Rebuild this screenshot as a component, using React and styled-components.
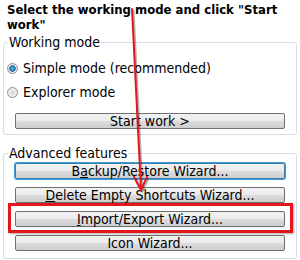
import React from "react";
import styled, { createGlobalStyle } from "styled-components";

const Global = createGlobalStyle`
  html, body { margin: 0; padding: 0; background: #fff; }
  body { width: 300px; height: 260px; overflow: hidden; }
`;

const Page = styled.div`
  position: relative;
  width: 300px;
  height: 260px;
  box-sizing: border-box;
  padding: 2px 3px 0 3px;
  font-family: "DejaVu Sans Condensed", "DejaVu Sans", sans-serif;
  color: #000;
`;

const Title = styled.h1`
  margin: 0 0 0 4px;
  font-size: 13px;
  line-height: 15px;
  font-weight: bold;
  width: 280px;
`;

const Group = styled.fieldset`
  margin: ${(p) => p.$top}px 0 0 0;
  padding: ${(p) => p.$pad};
  border: 1px solid #d5dfe5;
  border-radius: 3px;
  display: flex;
  flex-direction: column;
  gap: 8px;
  min-width: 0;
`;

const Legend = styled.legend`
  padding: 0 1px;
  margin-left: 0;
  font-size: 14px;
  line-height: 15px;
`;

const RadioRow = styled.label`
  display: flex;
  align-items: center;
  gap: 5px;
  font-size: 14px;
  line-height: 16px;
  margin-left: -1px;
`;

const RadioDot = styled.span`
  width: 9px;
  height: 9px;
  border-radius: 50%;
  border: 1px solid #8f8f8f;
  background: ${(p) =>
    p.$checked
      ? "radial-gradient(circle, #6cc3f0 0, #1e6fa8 2.5px, #2a7cb8 3px, #e8e8e8 3.6px, #f4f4f4 100%)"
      : "radial-gradient(circle, #d8d8d8 0, #eeeeee 60%, #f8f8f8 100%)"};
`;

const Button = styled.button`
  display: block;
  width: auto;
  height: 16px;
  margin: ${(p) => (p.$spaced ? "5px 7px 0 7px" : "0 7px")};
  padding: 0;
  box-sizing: border-box;
  border: 1px solid #707070;
  border-radius: 2px;
  background: linear-gradient(#f2f2f2 0%, #ebebeb 50%, #dddddd 51%, #cfcfcf 100%);
  font-family: "DejaVu Sans Condensed", "DejaVu Sans", sans-serif;
  font-size: 14px;
  line-height: 14px;
  color: #000;
  box-shadow: ${(p) => (p.$focused ? "0 0 0 1px #3c9bd6" : "none")};
  ${(p) => p.$focused && "border-color: #3c7fb1;"}
`;

const Key = styled.span`
  text-decoration: underline;
`;

const Highlight = styled.div`
  position: absolute;
  left: 8px;
  top: 203px;
  width: 285px;
  height: 30px;
  box-sizing: border-box;
  border: 3px solid #e3161b;
  box-shadow: 1px 1px 2px rgba(0, 0, 0, 0.35);
  pointer-events: none;
`;

const ArrowSvg = styled.svg`
  position: absolute;
  left: 0;
  top: 0;
  pointer-events: none;
`;

export default function App() {
  return (
    <>
      <Global />
      <Page>
        <Title>Select the working mode and click "Start work"</Title>
        <Group $top={3} $pad="10px 4px 5px 4px">
          <Legend>Working mode</Legend>
          <RadioRow>
            <RadioDot $checked />
            Simple mode (recommended)
          </RadioRow>
          <RadioRow>
            <RadioDot />
            Explorer mode
          </RadioRow>
          <Button $spaced>Start work &gt;</Button>
        </Group>
        <Group $top={11} $pad="2px 4px 7px 4px">
          <Legend>Advanced features</Legend>
          <Button $focused>
            B<Key>a</Key>ckup/Restore Wizard...
          </Button>
          <Button>
            <Key>D</Key>elete Empty Shortcuts Wizard...
          </Button>
          <Button>
            <Key>I</Key>mport/Export Wizard...
          </Button>
          <Button>Icon Wizard...</Button>
        </Group>
        <Highlight />
        <ArrowSvg width="300" height="260" viewBox="0 0 300 260">
          <g stroke="rgba(0,0,0,0.3)" strokeWidth="2" fill="none" transform="translate(1.5,1)">
            <line x1="132" y1="9" x2="141" y2="189" />
            <polyline points="134,177 141,190 147,177" />
          </g>
          <g stroke="#e3161b" strokeWidth="2" fill="none" strokeLinecap="round">
            <line x1="132" y1="9" x2="141" y2="189" />
            <polyline points="134,177 141,190 147,177" />
          </g>
        </ArrowSvg>
      </Page>
    </>
  );
}
